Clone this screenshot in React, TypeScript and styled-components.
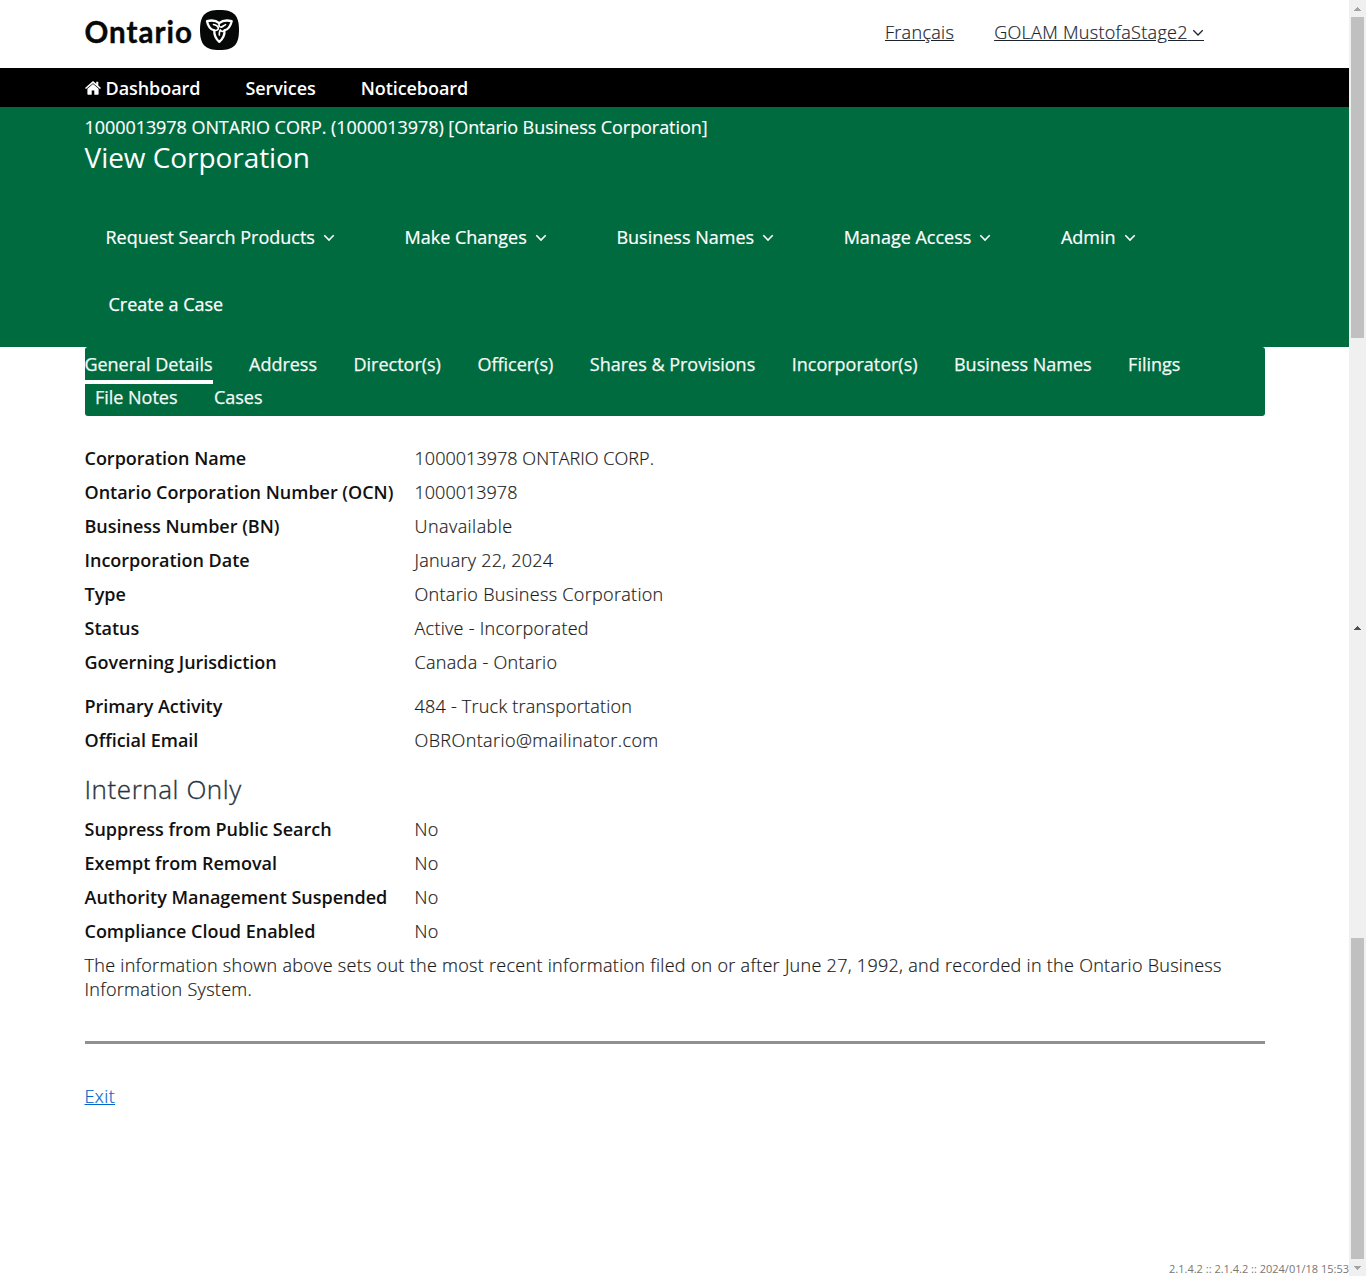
import React from 'react';
import styled, { createGlobalStyle } from 'styled-components';

const Global = createGlobalStyle`
  *, *::before, *::after { box-sizing: border-box; }
  html, body { margin: 0; padding: 0; }
  body { background: #fff; font-family: "Open Sans", "Noto Sans", sans-serif; font-size: 18px; line-height: 24px; color: #1a1a1a; overflow: hidden; }
  a { color: inherit; }
`;

const Screen = styled.div`
  display: flex;
  width: 1366px;
  height: 1276px;
`;
const Page = styled.div`
  display: flex;
  flex-direction: column;
  width: 1349px;
`;
const Wrap = styled.div`
  padding: 0 84px 0 84.5px;
`;

const Header = styled(Wrap)`
  display: flex;
  justify-content: space-between;
  height: 68px;
`;
const Brand = styled.div`
  display: flex;
  align-items: flex-start;
  padding-top: 10px;
  color: #050807;
  svg { margin-left: 7px; }
`;
const BrandName = styled.span`
  width: 108px;
  padding-top: 1px;
  font-family: Lato, sans-serif;
  font-weight: 700;
  font-size: 29.5px;
  line-height: 41px;
  letter-spacing: 1px;
  -webkit-text-stroke: 0.4px #050807;
  white-space: nowrap;
`;
const HeaderLinks = styled.div`
  display: flex;
  gap: 40px;
  padding: 20px 61.2px 0 0;
  font-weight: 300;
  letter-spacing: 0.3px;
  -webkit-text-stroke: 0.2px currentColor;
  color: #1a2530;
  white-space: nowrap;
`;
const UserLink = styled.a`
  display: flex;
`;
const UserChevron = styled.span`
  display: flex;
  align-items: center;
  height: 21px;
  padding: 5px 0 0 4px;
  border-bottom: 1px solid #1a2530;
`;

const TopNav = styled.nav`
  display: flex;
  align-items: center;
  gap: 45px;
  height: 39px;
  padding: 1px 84.5px 0;
  background: #000;
  color: #fff;
  font-weight: 600;
  letter-spacing: -0.06px;
`;
const TopNavItem = styled.a`
  display: flex;
  align-items: center;
  gap: 5px;
`;

const Banner = styled.section`
  height: 240px;
  padding: 8px 84.5px 0;
  background: #006b3f;
  color: #fff;
`;
const EntityName = styled.div`
  font-size: 18px;
  line-height: 24px;
  letter-spacing: -0.06px;
  -webkit-text-stroke: 0.15px currentColor;
`;
const Title = styled.h1`
  margin: 0;
  font-weight: 400;
  font-size: 28px;
  line-height: 36px;
  letter-spacing: -0.06px;
`;
const Actions = styled.div`
  display: flex;
  gap: 69.6px;
  padding: 50px 0 0 21px;
`;
const Action = styled.a`
  display: flex;
  align-items: center;
  gap: 8px;
  -webkit-text-stroke: 0.2px currentColor;
  white-space: nowrap;
  svg { margin-top: 1px; }
`;
const CaseAction = styled.div`
  padding: 43px 0 0 24px;
  -webkit-text-stroke: 0.25px currentColor;
`;

const Tabs = styled.nav`
  display: flex;
  flex-wrap: wrap;
  align-content: flex-start;
  width: 1180px;
  height: 69px;
  margin-left: 85px;
  background: #006b3f;
  border-radius: 3px;
  color: #f4f9f6;
  letter-spacing: -0.005px;
  -webkit-text-stroke: 0.25px currentColor;
`;
const Tab = styled.a<{ $active?: boolean }>`
  height: ${p => (p.$active ? '37px' : '33px')};
  margin: 0 26.6px ${p => (p.$active ? '-4px' : 0)} ${p => (p.$active ? '-0.6px' : '9.9px')};
  padding-top: 5px;
  border-bottom: ${p => (p.$active ? '4px solid #fff' : 'none')};
  white-space: nowrap;
`;

const Details = styled(Wrap)`
  padding-top: 26px;
`;
const Row = styled.div<{ $spaced?: boolean }>`
  display: grid;
  grid-template-columns: 330px 1fr;
  height: 34px;
  padding-top: 4px;
  margin-top: ${p => (p.$spaced ? '10px' : 0)};
`;
const Label = styled.span`
  font-weight: 600;
  color: #111;
  letter-spacing: -0.01px;
  white-space: nowrap;
`;
const Value = styled.span<{ $track?: number }>`
  font-weight: 300;
  color: #1a1a1a;
  letter-spacing: ${p => p.$track ?? 0.3}px;
  -webkit-text-stroke: 0.2px currentColor;
`;
const Heading = styled.h2`
  height: 55px;
  margin: 0;
  padding-top: 11px;
  font-weight: 300;
  font-size: 26px;
  line-height: 40px;
  letter-spacing: 0.57px;
  -webkit-text-stroke: 0.35px currentColor;
  color: #26343f;
`;
const Note = styled.p`
  margin: 0;
  padding-top: 4px;
  font-weight: 300;
  letter-spacing: 0.29px;
  -webkit-text-stroke: 0.2px currentColor;
`;
const Rule = styled.hr`
  height: 3px;
  margin: 40px 0 40px 0.5px;
  border: 0;
  background: #8f9191;
`;
const Exit = styled.a`
  font-weight: 300;
  letter-spacing: 0.4px;
  -webkit-text-stroke: 0.2px currentColor;
  color: #0066cc;
  text-decoration: underline;
`;
const Version = styled.footer`
  margin-top: auto;
  text-align: right;
  font-size: 11px;
  line-height: 14px;
  color: #777;
`;

const Scrollbars = styled.aside`
  width: 17px;
  background: #f0f0f0;
`;
const Piece = styled.div<{ $h: number }>`
  display: flex;
  justify-content: center;
  align-items: center;
  height: ${p => p.$h}px;
`;
const Thumb = styled.div<{ $h: number }>`
  width: 13px;
  height: ${p => p.$h}px;
  margin-left: 2px;
  background: #c0c0c0;
`;

const Chevron = ({ color = '#fff', weight = 1.6 }: { color?: string; weight?: number }) => (
  <svg width="12" height="8" viewBox="0 0 12 8" fill="none" stroke={color} strokeWidth={weight}>
    <path d="M1.3 1.3 6 6 10.7 1.3" />
  </svg>
);
const Arrow = ({ down, color }: { down?: boolean; color: string }) => (
  <svg width="7" height="4" viewBox="0 0 7 4" shapeRendering="crispEdges" fill={color}>
    <path d={down ? 'M0 0h7v1H6v1H5v1H4v1H3V3H2V2H1V1H0z' : 'M3 0h1v1h1v1h1v1h1v1H0V3h1V2h1V1h1z'} />
  </svg>
);
const Home = () => (
  <svg width="16" height="14" viewBox="0 0 16 14" fill="#fff">
    <path d="M8 3.1 13.6 7.8V13q0 .7-.7.7H9.3V9.6H6.7v4.1H3.1q-.7 0-.7-.7V7.8z" />
    <path d="M8 0 11.2 2.700V.7h2.100v3.800L16 6.900l-1 1.200L8 2.200 1 8.100 0 6.900z" />
  </svg>
);
const Trillium = () => (
  <svg width="39" height="40" viewBox="0 0 39 40" fill="none">
    <path d="M19.5 0C34 0 39 5.5 39 20s-5 20-19.5 20S0 34.5 0 20 5 0 19.500 0z" fill="#050807" />
    <g stroke="#fff" strokeWidth="2.3" strokeLinejoin="round" strokeLinecap="round">
      <path d="M19.2 13.2C15.5 10 11 10.1 7 11.2 8 16 10.5 19.6 14.3 20.4 14 25 16 29 19.3 31.8 22.5 29 24.9 25 24.5 20.3 28 19.600 30.500 16 31.700 11.200 27.500 10.100 23 10 19.200 13.200z" />
      <g strokeWidth="1.7">
        <path d="M14.300 20.400C17 20.800 18.700 19.500 18.300 17.600 17.600 15.600 15.500 14.800 13.500 14.500" />
        <path d="M19.200 13.200C18.400 15.700 19.500 17.300 21.300 17.200 23 16.500 24.300 15.200 25.500 14.700" />
        <path d="M24.500 20.300C23.500 21.800 21 21.600 20.300 20 19.300 22 19.100 23.500 19.300 25" />
      </g>
    </g>
  </svg>
);

const tabs = ['General Details', 'Address', 'Director(s)', 'Officer(s)', 'Shares & Provisions', 'Incorporator(s)', 'Business Names', 'Filings', 'File Notes', 'Cases'];
const actions = ['Request Search Products', 'Make Changes', 'Business Names', 'Manage Access', 'Admin'];
const general: { label: string; value: string; track?: number }[] = [
  { label: 'Corporation Name', value: '1000013978 ONTARIO CORP.', track: 0.04 },
  { label: 'Ontario Corporation Number (OCN)', value: '1000013978', track: 0.02 },
  { label: 'Business Number (BN)', value: 'Unavailable', track: 0.44 },
  { label: 'Incorporation Date', value: 'January 22, 2024', track: 0.25 },
  { label: 'Type', value: 'Ontario Business Corporation', track: 0.31 },
  { label: 'Status', value: 'Active - Incorporated', track: 0.28 },
  { label: 'Governing Jurisdiction', value: 'Canada - Ontario', track: 0.31 },
  { label: 'Primary Activity', value: '484 - Truck transportation', track: 0.23 },
  { label: 'Official Email', value: 'OBROntario@mailinator.com', track: 0.41 },
];
const internal = ['Suppress from Public Search', 'Exempt from Removal', 'Authority Management Suspended', 'Compliance Cloud Enabled'];

export default function App() {
  return (
    <Screen>
      <Global />
      <Page>
        <Header as="header">
          <Brand><BrandName>Ontario</BrandName><Trillium /></Brand>
          <HeaderLinks>
            <a href="#fr">Français</a>
            <UserLink href="#user">GOLAM MustofaStage2<UserChevron><Chevron color="#1a2530" weight={1.3} /></UserChevron></UserLink>
          </HeaderLinks>
        </Header>
        <TopNav>
          <TopNavItem><Home />Dashboard</TopNavItem>
          <TopNavItem>Services</TopNavItem>
          <TopNavItem>Noticeboard</TopNavItem>
        </TopNav>
        <Banner>
          <EntityName>1000013978 ONTARIO CORP. (1000013978) [Ontario Business Corporation]</EntityName>
          <Title>View Corporation</Title>
          <Actions>
            {actions.map(a => <Action key={a}>{a} <Chevron /></Action>)}
          </Actions>
          <CaseAction>Create a Case</CaseAction>
        </Banner>
        <Tabs>
          {tabs.map((t, i) => <Tab key={t} $active={i === 0}>{t}</Tab>)}
        </Tabs>
        <Details as="main">
          {general.map((r, i) => (
            <Row key={r.label} $spaced={i === 7}><Label>{r.label}</Label><Value $track={r.track}>{r.value}</Value></Row>
          ))}
          <Heading>Internal Only</Heading>
          {internal.map(k => <Row key={k}><Label>{k}</Label><Value>No</Value></Row>)}
          <Note>The information shown above sets out the most recent information filed on or after June 27, 1992, and recorded in the Ontario Business Information System.</Note>
          <Rule />
          <Exit href="#exit">Exit</Exit>
        </Details>
        <Version>2.1.4.2 :: 2.1.4.2 :: 2024/01/18 15:53</Version>
      </Page>
      <Scrollbars>
        <Piece $h={17}><Arrow color="#a3a3a3" /></Piece>
        <Thumb $h={321} />
        <Piece $h={281} />
        <Piece $h={17}><Arrow color="#505050" /></Piece>
        <Piece $h={302} />
        <Thumb $h={321} />
        <Piece $h={17}><Arrow down color="#a3a3a3" /></Piece>
      </Scrollbars>
    </Screen>
  );
}
